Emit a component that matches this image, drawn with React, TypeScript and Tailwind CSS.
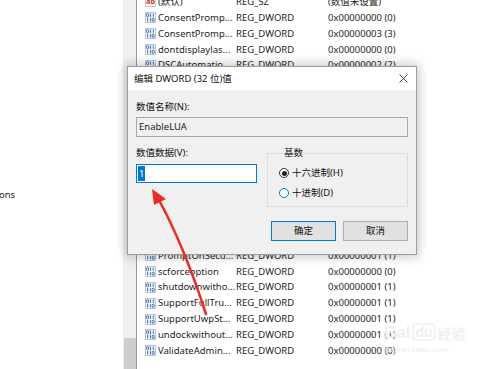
import React from "react";

const font = { fontFamily: "'Noto Sans', 'Noto Sans CJK SC', sans-serif" };

type Row = { name: string; type: string; data: string; sz?: boolean; hidden?: boolean };

const rows: Row[] = [
  { name: "(默认)", type: "REG_SZ", data: "(数值未设置)", sz: true },
  { name: "ConsentPromp...", type: "REG_DWORD", data: "0x00000000 (0)" },
  { name: "ConsentPromp...", type: "REG_DWORD", data: "0x00000003 (3)" },
  { name: "dontdisplaylas...", type: "REG_DWORD", data: "0x00000000 (0)" },
  { name: "DSCAutomatio...", type: "REG_DWORD", data: "0x00000002 (2)" },
  { name: "EnableCursorS...", type: "REG_DWORD", data: "0x00000001 (1)", hidden: true },
  { name: "EnableFullTrus...", type: "REG_DWORD", data: "0x00000002 (2)", hidden: true },
  { name: "EnableInstaller...", type: "REG_DWORD", data: "0x00000001 (1)", hidden: true },
  { name: "EnableLUA", type: "REG_DWORD", data: "0x00000001 (1)", hidden: true },
  { name: "EnableSecureU...", type: "REG_DWORD", data: "0x00000001 (1)", hidden: true },
  { name: "EnableUIADesk...", type: "REG_DWORD", data: "0x00000000 (0)", hidden: true },
  { name: "EnableUwpSta...", type: "REG_DWORD", data: "0x00000002 (2)", hidden: true },
  { name: "EnableVirtualiz...", type: "REG_DWORD", data: "0x00000001 (1)", hidden: true },
  { name: "FilterAdminist...", type: "REG_DWORD", data: "0x00000000 (0)", hidden: true },
  { name: "legalnoticecap...", type: "REG_SZ", data: "", sz: true, hidden: true },
  { name: "legalnoticetext", type: "REG_SZ", data: "", sz: true, hidden: true },
  { name: "PromptOnSecu...", type: "REG_DWORD", data: "0x00000001 (1)" },
  { name: "scforceoption", type: "REG_DWORD", data: "0x00000000 (0)" },
  { name: "shutdownwitho...", type: "REG_DWORD", data: "0x00000001 (1)" },
  { name: "SupportFullTru...", type: "REG_DWORD", data: "0x00000001 (1)" },
  { name: "SupportUwpSt...", type: "REG_DWORD", data: "0x00000001 (1)" },
  { name: "undockwithout...", type: "REG_DWORD", data: "0x00000001 (1)" },
  { name: "ValidateAdmin...", type: "REG_DWORD", data: "0x00000000 (0)" },
];

const DwordIcon = () => (
  <svg width="11" height="11" viewBox="0 0 11 11" className="shrink-0">
    <rect x="0.5" y="0.5" width="10" height="10" fill="#f4f6fa" stroke="#b8c2d6" />
    <ellipse cx="2.6" cy="3.2" rx="1.1" ry="1.7" fill="none" stroke="#2f5fb8" strokeWidth="0.9" />
    <rect x="5" y="1.5" width="0.9" height="3.4" fill="#2f5fb8" />
    <rect x="7.8" y="1.5" width="0.9" height="3.4" fill="#2f5fb8" />
    <rect x="2.2" y="6.1" width="0.9" height="3.4" fill="#2f5fb8" />
    <rect x="4.9" y="6.1" width="0.9" height="3.4" fill="#2f5fb8" />
    <ellipse cx="8.2" cy="7.8" rx="1.1" ry="1.7" fill="none" stroke="#2f5fb8" strokeWidth="0.9" />
  </svg>
);

const SzIcon = () => (
  <span className="w-[11px] h-[11px] shrink-0 border border-[#d0c8c8] bg-white flex items-center justify-center text-[7px] leading-none font-bold text-[#d0302a]">
    ab
  </span>
);

const Radio = ({ checked, label }: { checked?: boolean; label: string }) => (
  <div className="flex items-center h-[12px] gap-[3px]">
    <span
      className={
        checked
          ? "w-[10px] h-[10px] rounded-full border border-[#333] bg-white flex items-center justify-center"
          : "w-[10px] h-[10px] rounded-full border border-[#0078d7] bg-white"
      }
    >
      {checked && <span className="w-[5px] h-[5px] rounded-full bg-[#222]" />}
    </span>
    <span className="text-[9.5px] leading-[12px] text-[#111]">{label}</span>
  </div>
);

export default function App() {
  return (
    <div className="relative w-[500px] h-[369px] overflow-hidden bg-white text-[#1e1e1e]" style={font}>
      <div className="flex h-full">
        {/* tree pane */}
        <div className="w-[123px] pt-[189px] text-[9.5px] leading-[12px] text-[#222]">
          <div className="-ml-[1px]">ons</div>
        </div>
        <div className="w-[13px] bg-[#f0f0f0] flex flex-col justify-end">
          <div className="h-[31px] ml-[1px] bg-[#cdcdcd]" />
        </div>
        {/* list pane */}
        <div className="flex-1 border-l border-[#9a9a9a] pl-[8px]">
          <div className="-mt-[6px] flex flex-col">
            {rows.map((r, i) => (
              <div
                key={i}
                className={
                  r.hidden
                    ? "invisible h-[15.86px] flex items-center text-[9.5px] leading-[12px] whitespace-nowrap"
                    : "h-[15.86px] flex items-center text-[9.5px] leading-[12px] whitespace-nowrap"
                }
              >
                {r.sz ? <SzIcon /> : <DwordIcon />}
                <span className="w-[78px] ml-[2px] overflow-hidden">{r.name}</span>
                <span className="w-[92px]">{r.type}</span>
                <span>{r.data}</span>
              </div>
            ))}
          </div>
        </div>
      </div>

      {/* dialog */}
      <div className="absolute left-[127px] top-[66px] w-[290px] h-[189px] border border-[#9c9c9c] bg-[#f0f0f0] shadow-[0_0_10px_2px_rgba(0,0,0,0.22)] flex flex-col">
        <div className="h-[23px] bg-white flex items-center justify-between pl-[6px] pr-[8px]">
          <span className="text-[9.5px] leading-[12px] text-[#111]">编辑 DWORD (32 位)值</span>
          <svg width="9" height="9" viewBox="0 0 9 9">
            <path d="M0.5 0.5 L8.5 8.5 M8.5 0.5 L0.5 8.5" stroke="#333" strokeWidth="0.9" />
          </svg>
        </div>
        <div className="flex-1 px-[8px] pt-[11px] flex flex-col">
          <div className="text-[9.5px] leading-[12px] text-[#111]">数值名称(N):</div>
          <div className="mt-[4px] h-[20px] border border-[#a8a8a8] bg-[#f0f0f0] flex items-center px-[2px] text-[9.5px] text-[#222]">
            EnableLUA
          </div>
          <div className="mt-[10px] flex gap-[10px]">
            <div className="w-[121px] flex flex-col">
              <div className="text-[9.5px] leading-[12px] text-[#111]">数值数据(V):</div>
              <div className="mt-[5px] h-[19px] border border-[#0078d7] bg-white flex items-center pl-[1px]">
                <span className="bg-[#0078d7] text-white text-[9.5px] leading-[15px] px-[1px]">1</span>
              </div>
            </div>
            <div className="flex-1 flex flex-col">
              <fieldset className="h-[60px] border border-[#dcdcdc] pl-[11px] m-0">
                <legend className="ml-[4px] px-[1px] text-[9.5px] leading-[12px] text-[#111]">基数</legend>
                <div className="mt-[8px] flex flex-col gap-[8px]">
                  <Radio checked label="十六进制(H)" />
                  <Radio label="十进制(D)" />
                </div>
              </fieldset>
              <div className="mt-[14px] flex justify-end gap-[7px]">
                <div className="w-[65px] h-[20px] border border-[#0078d7] bg-[#e1e1e1] flex items-center justify-center text-[9.5px] text-[#111]">
                  确定
                </div>
                <div className="w-[65px] h-[20px] border border-[#adadad] bg-[#e1e1e1] flex items-center justify-center text-[9.5px] text-[#111]">
                  取消
                </div>
              </div>
            </div>
          </div>
        </div>
      </div>

      {/* watermark */}
      <div className="absolute left-[384px] top-[323px] flex flex-col items-start pointer-events-none select-none" style={{ fontFamily: "'Liberation Sans', 'Noto Sans CJK SC', sans-serif" }}>
        <div className="flex items-end gap-[2px] leading-none">
          <span className="text-[17px] font-bold text-[#f0f0f0]">Bai</span>
          <span className="text-[14px] font-bold text-[#f0f0f0] border-2 border-[#f2f2f2] rounded-[5px] px-[1px] leading-[14px]">du</span>
          <span className="text-[14px] font-bold text-[#efefef]">经验</span>
        </div>
        <span className="text-[8px] text-[#ededed] mt-[3px]">jingyan.baidu.com</span>
      </div>

      {/* red arrow */}
      <svg className="absolute left-0 top-0 pointer-events-none" width="500" height="369" viewBox="0 0 500 369">
        <path d="M206 314 C 195 280, 178 235, 159 200" stroke="#ee2a24" strokeWidth="2.6" fill="none" strokeLinecap="round" />
        <polygon points="152,189 166,199 154,205" fill="#ee2a24" />
      </svg>
    </div>
  );
}
